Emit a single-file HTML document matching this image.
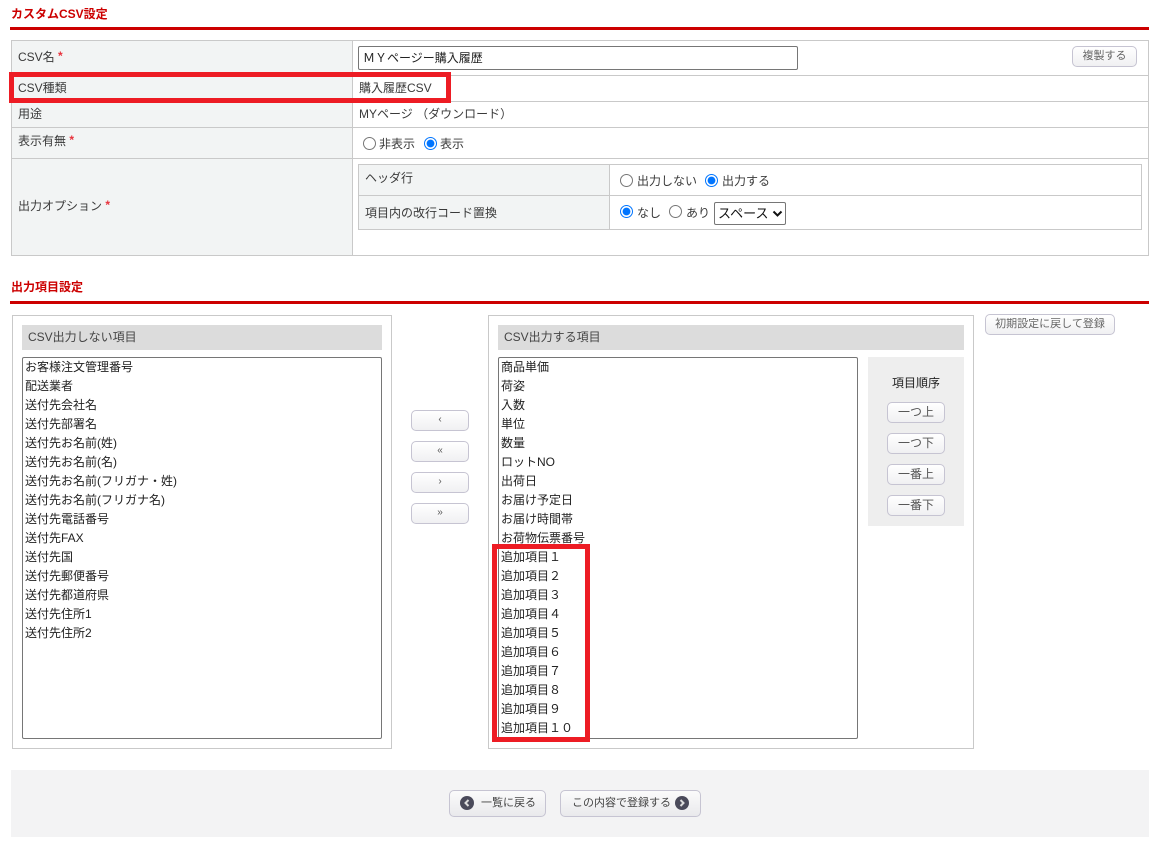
<!DOCTYPE html>
<html lang="ja"><head><meta charset="utf-8"><title>カスタムCSV設定</title>
<style>
html,body{margin:0;padding:0;background:#fff}
body{position:relative;width:1160px;height:841px;overflow:hidden;font-family:"Liberation Sans","Noto Sans CJK JP",sans-serif;font-size:12px;color:#3a3a3a}
.a{position:absolute;box-sizing:border-box;white-space:nowrap}
.t{line-height:18px}
.h{color:#c00;font-weight:bold;font-size:12px;line-height:18px}
.line{left:10px;width:1139px;height:3px;background:#c00}
.g{background:#f2f4f4}
.b{background:#c9c9c9}
.s{color:#e8323c;font-weight:bold;position:relative;top:-1px}
.btn{border:1px solid #c6c4d2;border-radius:5px;background:linear-gradient(#fff,#f0f0f2);color:#666;text-align:center;font-size:11px}
.ord{font-size:12px;color:#555}
.arr{font-size:10px;color:#555}
.list{border:1px solid #767676;border-radius:2px;background:#fff;color:#222;padding:0 2px;overflow:hidden;line-height:19px}
.list div{height:19px;line-height:18px}
input[type=radio]{position:absolute;margin:0;width:13px;height:13px;accent-color:#0075ff}
.panel{border:1px solid #c9c9c9;background:#fff}
.ph{background:#dcdcdc;line-height:25px;padding-left:6px;color:#444}
</style></head><body>
<div class="a h" style="left:11px;top:5px">カスタムCSV設定</div>
<div class="a line" style="top:27px"></div>

<div class="a g" style="left:11px;top:41px;width:341px;height:214px"></div>
<div class="a b" style="left:11px;top:40px;width:1138px;height:1px"></div>
<div class="a b" style="left:11px;top:75px;width:1138px;height:1px"></div>
<div class="a b" style="left:11px;top:101px;width:1138px;height:1px"></div>
<div class="a b" style="left:11px;top:127px;width:1138px;height:1px"></div>
<div class="a b" style="left:11px;top:158px;width:1138px;height:1px"></div>
<div class="a b" style="left:11px;top:255px;width:1138px;height:1px"></div>
<div class="a b" style="left:11px;top:40px;width:1px;height:216px"></div>
<div class="a b" style="left:352px;top:40px;width:1px;height:216px"></div>
<div class="a b" style="left:1148px;top:40px;width:1px;height:216px"></div>

<div class="a t" style="left:18px;top:48px">CSV名 <span class="s">*</span></div>
<div class="a t" style="left:18px;top:79px">CSV種類</div>
<div class="a t" style="left:18px;top:105px">用途</div>
<div class="a t" style="left:18px;top:132px">表示有無 <span class="s">*</span></div>
<div class="a t" style="left:18px;top:197px">出力オプション <span class="s">*</span></div>

<div class="a t" style="left:358px;top:46px;width:440px;height:24px;border:1px solid #767676;border-radius:2px;line-height:22px;padding-left:4px;color:#222">ＭＹページー購入履歴</div>
<div class="a btn" style="left:1072px;top:46px;width:65px;height:21px;line-height:18px">複製する</div>
<div class="a t" style="left:359px;top:79px">購入履歴CSV</div>
<div class="a t" style="left:359px;top:105px">MYページ （ダウンロード）</div>

<input type="radio" style="left:363px;top:137px">
<div class="a t" style="left:379px;top:135px">非表示</div>
<input type="radio" checked style="left:424px;top:137px">
<div class="a t" style="left:440px;top:135px">表示</div>

<div class="a g" style="left:358px;top:164px;width:252px;height:66px"></div>
<div class="a b" style="left:358px;top:164px;width:784px;height:1px"></div>
<div class="a b" style="left:358px;top:195px;width:784px;height:1px"></div>
<div class="a b" style="left:358px;top:229px;width:784px;height:1px"></div>
<div class="a b" style="left:358px;top:164px;width:1px;height:66px"></div>
<div class="a b" style="left:609px;top:164px;width:1px;height:66px"></div>
<div class="a b" style="left:1141px;top:164px;width:1px;height:66px"></div>
<div class="a t" style="left:365px;top:169px">ヘッダ行</div>
<div class="a t" style="left:365px;top:204px">項目内の改行コード置換</div>
<input type="radio" style="left:620px;top:174px">
<div class="a t" style="left:637px;top:172px">出力しない</div>
<input type="radio" checked style="left:705px;top:174px">
<div class="a t" style="left:722px;top:172px">出力する</div>
<input type="radio" checked style="left:620px;top:205px">
<div class="a t" style="left:637px;top:204px">なし</div>
<input type="radio" style="left:669px;top:205px">
<div class="a t" style="left:686px;top:204px">あり</div>
<div class="a" style="left:714px;top:202px;width:72px;height:23px;border:1px solid #767676;border-radius:2px;line-height:21px;padding-left:3px;color:#111;font-size:13px">スペース<svg style="position:absolute;left:57px;top:7px" width="11" height="8" viewBox="0 0 11 8"><path d="M1.5 1.5L5.5 5.5L9.5 1.5" fill="none" stroke="#111" stroke-width="2"/></svg></div>

<div class="a h" style="left:11px;top:278px">出力項目設定</div>
<div class="a line" style="top:301px"></div>

<div class="a panel" style="left:12px;top:315px;width:380px;height:434px"></div>
<div class="a ph" style="left:22px;top:325px;width:360px;height:25px">CSV出力しない項目</div>
<div class="a list" style="left:22px;top:357px;width:360px;height:382px">
<div>お客様注文管理番号</div><div>配送業者</div><div>送付先会社名</div><div>送付先部署名</div><div>送付先お名前(姓)</div><div>送付先お名前(名)</div><div>送付先お名前(フリガナ・姓)</div><div>送付先お名前(フリガナ名)</div><div>送付先電話番号</div><div>送付先FAX</div><div>送付先国</div><div>送付先郵便番号</div><div>送付先都道府県</div><div>送付先住所1</div><div>送付先住所2</div>
</div>

<div class="a btn arr" style="left:411px;top:410px;width:58px;height:21px;line-height:18px">‹</div>
<div class="a btn arr" style="left:411px;top:441px;width:58px;height:21px;line-height:18px">«</div>
<div class="a btn arr" style="left:411px;top:472px;width:58px;height:21px;line-height:18px">›</div>
<div class="a btn arr" style="left:411px;top:503px;width:58px;height:21px;line-height:18px">»</div>

<div class="a panel" style="left:488px;top:315px;width:486px;height:434px"></div>
<div class="a ph" style="left:498px;top:325px;width:466px;height:25px">CSV出力する項目</div>
<div class="a list" style="left:498px;top:357px;width:360px;height:382px">
<div>商品単価</div><div>荷姿</div><div>入数</div><div>単位</div><div>数量</div><div>ロットNO</div><div>出荷日</div><div>お届け予定日</div><div>お届け時間帯</div><div>お荷物伝票番号</div><div>追加項目１</div><div>追加項目２</div><div>追加項目３</div><div>追加項目４</div><div>追加項目５</div><div>追加項目６</div><div>追加項目７</div><div>追加項目８</div><div>追加項目９</div><div>追加項目１０</div>
</div>

<div class="a" style="left:868px;top:357px;width:96px;height:169px;background:#eee"></div>
<div class="a t" style="left:868px;top:374px;width:96px;text-align:center;color:#222">項目順序</div>
<div class="a btn ord" style="left:887px;top:402px;width:58px;height:21px;line-height:18px">一つ上</div>
<div class="a btn ord" style="left:887px;top:433px;width:58px;height:21px;line-height:18px">一つ下</div>
<div class="a btn ord" style="left:887px;top:464px;width:58px;height:21px;line-height:18px">一番上</div>
<div class="a btn ord" style="left:887px;top:495px;width:58px;height:21px;line-height:18px">一番下</div>

<div class="a btn" style="left:985px;top:314px;width:130px;height:21px;line-height:18px">初期設定に戻して登録</div>

<div class="a" style="left:11px;top:770px;width:1138px;height:67px;background:#f3f3f4"></div>
<div class="a btn" style="left:449px;top:790px;width:97px;height:27px;line-height:25px;background:linear-gradient(#fbfbfb,#e9e9ec);color:#444;text-align:left;padding-left:31px">一覧に戻る</div>
<div class="a btn" style="left:560px;top:790px;width:141px;height:27px;line-height:25px;background:linear-gradient(#fbfbfb,#e9e9ec);color:#444;text-align:left;padding-left:11px">この内容で登録する</div>
<svg class="a" style="left:460px;top:796px" width="14" height="14" viewBox="0 0 14 14"><circle cx="7" cy="7" r="7" fill="#4a4a5a"/><path d="M8.5 4L5.5 7L8.5 10" fill="none" stroke="#ddd" stroke-width="2"/></svg>
<svg class="a" style="left:675px;top:796px" width="14" height="14" viewBox="0 0 14 14"><circle cx="7" cy="7" r="7" fill="#4a4a5a"/><path d="M5.5 4L8.5 7L5.5 10" fill="none" stroke="#ddd" stroke-width="2"/></svg>

<div class="a" style="left:9px;top:72px;width:442px;height:31px;border:5px solid #ed1c24"></div>
<div class="a" style="left:492px;top:544px;width:98px;height:198px;border:5px solid #ed1c24"></div>
</body></html>
